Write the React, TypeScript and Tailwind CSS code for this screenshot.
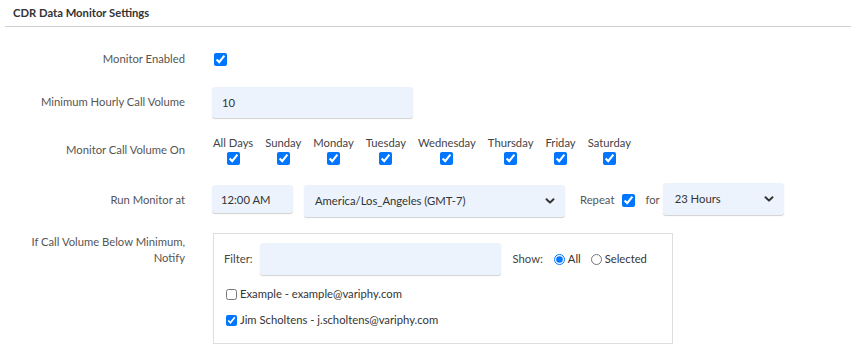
import { useState } from 'react'

const DAYS = ['All Days', 'Sunday', 'Monday', 'Tuesday', 'Wednesday', 'Thursday', 'Friday', 'Saturday']

function Chevron() {
  return (
    <svg className="w-[10px] h-[10px] text-[#333]" viewBox="0 0 10 10" fill="none">
      <path d="M1.5 3.2L5 6.6L8.5 3.2" stroke="currentColor" strokeWidth="2" strokeLinecap="round" strokeLinejoin="round" />
    </svg>
  )
}

function Row({ label, children, className = '', labelClass = '' }: { label: React.ReactNode; children: React.ReactNode; className?: string; labelClass?: string }) {
  return (
    <div className={`flex ${className}`}>
      <div className={`w-[185px] shrink-0 text-right text-[#555] ${labelClass}`}>{label}</div>
      <div className="ml-[27px] flex-1 min-w-0">{children}</div>
    </div>
  )
}

export default function App() {
  const [enabled, setEnabled] = useState(true)
  const [days, setDays] = useState<boolean[]>(DAYS.map(() => true))
  const [repeat, setRepeat] = useState(true)
  const [show, setShow] = useState('all')
  const [contacts, setContacts] = useState([
    { name: 'Example - example@variphy.com', checked: false },
    { name: 'Jim Scholtens - j.scholtens@variphy.com', checked: true },
  ])

  return (
    <div className="w-[851px] h-[359px] bg-white text-[11.25px] text-[#333] overflow-hidden" style={{ fontFamily: 'Lato, "Open Sans", sans-serif' }}>
      {/* header */}
      <div className="ml-[5px] h-[27px] border-b border-[#cfcfcf] pl-[8px] pt-[5px]">
        <h1 className="font-bold text-[11.25px] leading-[15px] text-[#333]">CDR Data Monitor Settings</h1>
      </div>

      {/* monitor enabled */}
      <Row label="Monitor Enabled" className="mt-[20px] h-[24px] items-center" labelClass="leading-[24px]">
        <div className="flex items-center h-[24px] pl-[2px]">
          <input type="checkbox" checked={enabled} onChange={() => setEnabled(!enabled)} className="w-[13px] h-[13px] m-0 accent-[#0075ff]" />
        </div>
      </Row>

      {/* min hourly */}
      <Row label="Minimum Hourly Call Volume" className="mt-[16px] items-center">
        <input
          value="10"
          readOnly
          className="w-[201px] h-[31px] rounded-[3px] bg-[#edf3fd] px-[10px] text-[11.25px] text-[#333] outline-none shadow-[0_1px_1px_rgba(0,0,0,0.18)]"
        />
      </Row>

      {/* days */}
      <Row label="Monitor Call Volume On" className="mt-[18px] items-center">
        <div className="flex gap-[12px] pl-[1px]">
          {DAYS.map((d, i) => (
            <label key={d} className="flex flex-col items-center">
              <span className="leading-[14px] text-[#444]">{d}</span>
              <input
                type="checkbox"
                checked={days[i]}
                onChange={() => setDays(days.map((v, j) => (j === i ? !v : v)))}
                className="mt-[2px] w-[13px] h-[13px] m-0 accent-[#0075ff]"
              />
            </label>
          ))}
        </div>
      </Row>

      {/* run monitor at */}
      <Row label="Run Monitor at" className="mt-[18px] items-center">
        <div className="flex items-center h-[34px]">
          <input
            value="12:00 AM"
            readOnly
            className="w-[81px] h-[28px] rounded-[3px] bg-[#edf3fd] px-[9px] text-[11.25px] text-[#333] outline-none shadow-[0_1px_1px_rgba(0,0,0,0.18)] self-start mt-[2px]"
          />
          <div className="ml-[11px] w-[261px] h-[32px] rounded-[3px] bg-[#edf3fd] shadow-[0_1px_1px_rgba(0,0,0,0.18)] flex items-center justify-between pl-[11px] pr-[10px] self-start mt-[2px]">
            <span>America/Los_Angeles (GMT-7)</span>
            <Chevron />
          </div>
          <span className="ml-[15px] text-[#555]">Repeat</span>
          <input type="checkbox" checked={repeat} onChange={() => setRepeat(!repeat)} className="ml-[8px] w-[13px] h-[13px] m-0 accent-[#0075ff]" />
          <span className="ml-[10px] text-[#555]">for</span>
          <div className="ml-[3px] w-[121px] h-[32px] rounded-[3px] bg-[#edf3fd] shadow-[0_1px_1px_rgba(0,0,0,0.18)] flex items-center justify-between pl-[12px] pr-[10px] self-start">
            <span>23 Hours</span>
            <Chevron />
          </div>
        </div>
      </Row>

      {/* notify */}
      <Row
        label={<>If Call Volume Below Minimum,<br />Notify</>}
        className="mt-[16px]"
        labelClass="leading-[16px] pt-[1px]"
      >
        <div className="ml-[1px] w-[460px] h-[111px] border border-[#dedede] pl-[10px] pt-[9px]">
          <div className="flex items-center">
            <span className="text-[#444]">Filter:</span>
            <input className="ml-[7px] w-[241px] h-[32px] rounded-[3px] bg-[#edf3fd] outline-none shadow-[0_1px_1px_rgba(0,0,0,0.18)]" />
            <span className="ml-[12px] text-[#444]">Show:</span>
            <label className="ml-[11px] flex items-center gap-[3px]">
              <input type="radio" name="show" checked={show === 'all'} onChange={() => setShow('all')} className="w-[11px] h-[11px] m-0 accent-[#0075ff]" />
              <span className="text-[#333]">All</span>
            </label>
            <label className="ml-[10px] flex items-center gap-[3px]">
              <input type="radio" name="show" checked={show === 'selected'} onChange={() => setShow('selected')} className="w-[11px] h-[11px] m-0 accent-[#0075ff]" />
              <span className="text-[#333]">Selected</span>
            </label>
          </div>
          <div className="mt-[12px] flex flex-col gap-[11px] pl-[2px]">
            {contacts.map((c, i) => (
              <label key={c.name} className="flex items-center gap-[3px] h-[15px]">
                <input
                  type="checkbox"
                  checked={c.checked}
                  onChange={() => setContacts(contacts.map((x, j) => (j === i ? { ...x, checked: !x.checked } : x)))}
                  className="w-[11px] h-[11px] m-0 accent-[#0075ff]"
                />
                <span className="text-[#333]">{c.name}</span>
              </label>
            ))}
          </div>
        </div>
      </Row>
    </div>
  )
}
